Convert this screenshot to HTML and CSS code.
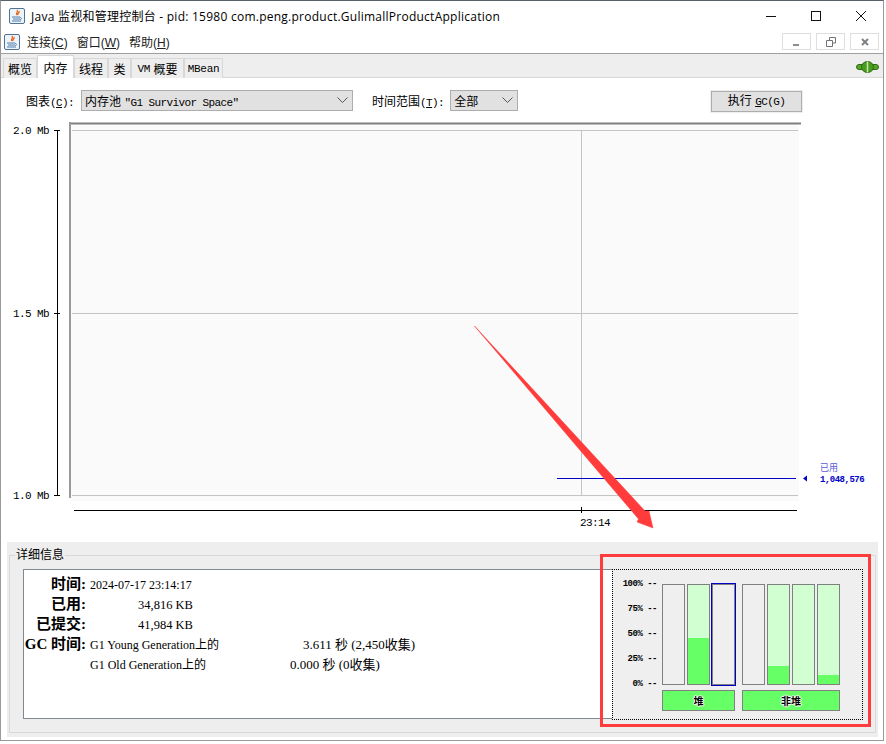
FILE: index.html
```html
<!DOCTYPE html>
<html>
<head>
  <title>Java 监视和管理控制台</title>
  <link rel="stylesheet" href="styles.css">
</head>
<body>
  <div class="window">
    <header class="titlebar">
      <svg class="java-icon" viewBox="0 0 16 16"><rect x="0.5" y="0.5" width="15" height="15" rx="1.5" fill="#eef3f8" stroke="#4f7396"/><path d="M8 2c2 2-2 3 0 5M10 3c1 2-2 2-1 4" fill="none" stroke="#e0641e" stroke-width="1.3"/><path d="M3 9h8M4 11h7M3 13h9" stroke="#4f7fae"/><path d="M11 9.500c2 0 2 2 0 2" fill="none" stroke="#4f7fae"/></svg>
      <span class="title-text">Java 监视和管理控制台 - pid: 15980 com.peng.product.GulimallProductApplication</span>
      <div class="win-controls">
        <svg width="10" height="10" viewBox="0 0 10 10"><path d="M0 5.500h10" stroke="#111"/></svg>
        <svg width="10" height="10" viewBox="0 0 10 10"><rect x="0.500" y="0.500" width="9" height="9" fill="none" stroke="#111"/></svg>
        <svg width="10" height="10" viewBox="0 0 10 10"><path d="M0 0l10 10M10 0L0 10" stroke="#111"/></svg>
      </div>
    </header>

    <nav class="menubar">
      <svg class="java-icon menu-icon" viewBox="0 0 16 16"><rect x="0.5" y="0.5" width="15" height="15" rx="1.5" fill="#eef3f8" stroke="#4f7396"/><path d="M8 2c2 2-2 3 0 5M10 3c1 2-2 2-1 4" fill="none" stroke="#e0641e" stroke-width="1.3"/><path d="M3 9h8M4 11h7M3 13h9" stroke="#4f7fae"/><path d="M11 9.500c2 0 2 2 0 2" fill="none" stroke="#4f7fae"/></svg>
      <span class="menu-item">连接(<u>C</u>)</span>
      <span class="menu-item">窗口(<u>W</u>)</span>
      <span class="menu-item">帮助(<u>H</u>)</span>
      <div class="frame-controls">
        <div class="frame-btn"><svg width="10" height="10" viewBox="0 0 10 10"><rect x="1" y="7" width="6" height="2" fill="#8a8f94"/></svg></div>
        <div class="frame-btn"><svg width="10" height="10" viewBox="0 0 10 10"><path d="M3.500 3V.5h6V6H7M.5 3.500h6v6h-6z" fill="none" stroke="#6f7479"/></svg></div>
        <div class="frame-btn"><svg width="10" height="10" viewBox="0 0 10 10"><path d="M2 2l6 6M8 2L2 8" stroke="#7d8287" stroke-width="2"/></svg></div>
      </div>
    </nav>

    <div class="tabbar">
      <span class="tab tab-1">概览</span>
      <span class="tab tab-active">内存</span>
      <span class="tab tab-3">线程</span>
      <span class="tab tab-4">类</span>
      <span class="tab tab-5"><span class="mono">VM</span> 概要</span>
      <span class="tab tab-6"><span class="mono">MBean</span></span>
      <svg class="plug" width="23" height="12" viewBox="0 0 23 12">
        <rect x="0.500" y="3.500" width="22" height="5" rx="2.500" fill="#58a62a" stroke="#2f6a14"/>
        <ellipse cx="11.500" cy="6" rx="6" ry="5.500" fill="#4a9c20" stroke="#2f6a14"/>
        <path d="M11.500 0.500v11" stroke="#c6e6ac" stroke-width="1.500"/>
      </svg>
    </div>

    <div class="toolbar">
      <span class="field-label">图表<span class="mono">(<u>C</u>):</span></span>
      <div class="combo combo-chart"><span>内存池 <span class="mono">"G1 Survivor Space"</span></span><svg width="11" height="6" viewBox="0 0 11 6"><path d="M.5.500l5 5 5-5" fill="none" stroke="#555"/></svg></div>
      <span class="field-label label-range">时间范围<span class="mono">(<u>T</u>):</span></span>
      <div class="combo combo-range"><span>全部</span><svg width="11" height="6" viewBox="0 0 11 6"><path d="M.5.500l5 5 5-5" fill="none" stroke="#555"/></svg></div>
      <div class="gc-button">执行 <span class="mono"><u>G</u>C(G)</span></div>
    </div>

    <svg class="chart" width="886" height="420" viewBox="0 122 886 420">
      <rect x="71" y="124" width="728" height="377" fill="#fafafa"/>
      <path d="M69 123.500H801" stroke="#7f7f7f" stroke-width="2"/>
      <path d="M70 122V498" stroke="#9a9a9a" stroke-width="2"/>
      <g stroke="#c4c4c4">
        <path d="M72 130.500H798M72 313.500H798M72 495.500H798M581.500 130V495"/>
      </g>
      <g stroke="#000">
        <path d="M57.500 130V496M54 130.500H60M54 313.500H60M54 495.500H60"/>
        <path d="M74 510.500H797M581.500 507V513"/>
      </g>
      <path d="M557 478.500H796" stroke="#0000c8"/>
      <path d="M807 475.500v6l-4-3z" fill="#0000c8"/>
      <g class="axis-text">
        <text x="49" y="134" text-anchor="end">2.0 Mb</text>
        <text x="49" y="317" text-anchor="end">1.5 Mb</text>
        <text x="49" y="499" text-anchor="end">1.0 Mb</text>
        <text x="580" y="526">23:14</text>
      </g>
      <text x="820" y="471" class="used-label">已用</text>
      <text x="820" y="482" class="used-value">1,048,576</text>
    </svg>

    <section class="details">
      <fieldset class="details-group">
        <legend>详细信息</legend>
        <div class="details-body">
          <div class="info-box">
            <div class="info-row"><b>时间:</b><span>2024-07-17 23:14:17</span></div>
            <div class="info-row"><b>已用:</b><span class="kb">34,816 KB</span></div>
            <div class="info-row"><b>已提交:</b><span class="kb">41,984 KB</span></div>
            <div class="info-row"><b>GC 时间:</b><span class="gc-name">G1 Young Generation上的</span><span class="gc-young">3.611 秒 (2,450收集)</span></div>
            <div class="info-row"><b></b><span class="gc-name">G1 Old Generation上的</span><span class="gc-old">0.000 秒 (0收集)</span></div>
          </div>
          <div class="pools">
            <div class="scale">
              <span>100% --</span><span>75% --</span><span>50% --</span><span>25% --</span><span>0% --</span>
            </div>
            <div class="pool-groups">
              <div class="pool-group">
                <div class="bars">
                  <div class="bar"></div>
                  <div class="bar committed"><div class="used" style="height: 46%"></div></div>
                  <div class="bar selected"></div>
                </div>
                <div class="group-label">堆</div>
              </div>
              <div class="pool-group">
                <div class="bars">
                  <div class="bar"></div>
                  <div class="bar committed"><div class="used" style="height: 18%"></div></div>
                  <div class="bar committed"></div>
                  <div class="bar committed"><div class="used" style="height: 9%"></div></div>
                </div>
                <div class="group-label">非堆</div>
              </div>
            </div>
          </div>
        </div>
      </fieldset>
    </section>
  </div>

  <div class="annot-box"></div>
  <svg class="annot-arrow" width="886" height="744" viewBox="0 0 886 744">
    <path d="M474.500 326L645 511 649 511 653 528 637 522 638.500 519z" fill="#ff3b3b" stroke="#ff3b3b" stroke-width="0.5"/>
  </svg>
</body>
</html>
```

FILE: styles.css
```css
* {
  box-sizing: border-box;
}
body {
  margin: 0;
  width: 886px;
  height: 744px;
  overflow: hidden;
  background: #fff;
  font-family: "Liberation Sans", "Noto Sans CJK SC", sans-serif;
  font-size: 12px;
  color: #000;
  position: relative;
}
.window {
  width: 884px;
  height: 741px;
  border-top: 1px solid #5a6068;
  border-left: 1px solid #9a9a9a;
  border-right: 1px solid #9a9a9a;
  border-bottom: 1px solid #9a9a9a;
  display: flex;
  flex-direction: column;
}
.titlebar {
  height: 29px;
  flex: none;
  display: flex;
  align-items: center;
  padding-left: 8px;
}
.java-icon {
  width: 16px;
  height: 16px;
  flex: none;
}
.title-text {
  margin-left: 6px;
  font-family: "Open Sans", "Noto Sans CJK SC", sans-serif;
  font-size: 12px;
  letter-spacing: 0.25px;
  color: #000;
}
.win-controls {
  margin-left: auto;
  display: flex;
  gap: 35px;
  padding-right: 17px;
}
.menubar {
  height: 24px;
  flex: none;
  display: flex;
  align-items: center;
  padding-left: 3px;
  border-bottom: 1px solid #a0a0a0;
}
.menu-icon {
  margin-right: 7px;
}
.menu-item {
  margin-right: 9px;
  color: #222;
}
.frame-controls {
  margin-left: auto;
  display: flex;
  gap: 5px;
  padding-right: 4px;
}
.frame-btn {
  width: 29px;
  height: 17px;
  border: 1px solid #dedede;
  display: flex;
  align-items: center;
  justify-content: center;
}
.tabbar {
  height: 24px;
  flex: none;
  background: #eee;
  border-bottom: 1px solid #d8d8d8;
  display: flex;
  align-items: flex-end;
  padding-left: 2px;
  position: relative;
}
.tab {
  height: 20px;
  margin-bottom: -1px;
  display: flex;
  align-items: center;
  justify-content: center;
  border: 1px solid #d8d8d8;
  border-bottom: none;
  background: #eee;
  font-size: 12px;
  white-space: pre;
}
.tab .mono {
  letter-spacing: -0.3px;
}
.tab-1 { width: 34px; }
.tab-3 { width: 34px; }
.tab-4 { width: 23px; }
.tab-5 { width: 53px; }
.tab-6 { width: 39px; }
.tab-active {
  width: 37px;
  height: 23px;
  background: #fff;
}
.plug {
  position: absolute;
  right: 4px;
  top: 7px;
}
.mono {
  font-family: "Liberation Mono", monospace;
  font-size: 11px;
  letter-spacing: -0.6px;
}
.toolbar {
  height: 44px;
  flex: none;
  display: flex;
  align-items: center;
  padding: 0 81px 0 25px;
}
.field-label {
  margin-right: 7px;
  white-space: nowrap;
}
.label-range {
  margin-left: 19px;
  margin-right: 6px;
}
.combo {
  height: 21px;
  background: #e1e1e1;
  border: 1px solid #adadad;
  display: flex;
  align-items: center;
  justify-content: space-between;
  padding: 0 4px 0 3px;
}
.combo-chart {
  width: 272px;
}
.combo-range {
  width: 68px;
}
.gc-button {
  margin-left: auto;
  width: 91px;
  height: 21px;
  margin-top: 2px;
  background: #e1e1e1;
  border: 1px solid #adadad;
  outline: 1px solid #eee;
  text-align: center;
  line-height: 19px;
}
.chart {
  display: block;
  flex: none;
  height: 420px;
  margin-left: -1px;
}
.axis-text text {
  font-family: "Liberation Mono", monospace;
  font-size: 11px;
  letter-spacing: -0.6px;
}
.used-label {
  font-size: 9px;
  fill: #5a5ad8;
}
.used-value {
  font-family: "Liberation Mono", monospace;
  font-size: 9px;
  font-weight: bold;
  letter-spacing: -0.5px;
  fill: #0000c8;
}
.details {
  flex: 1;
  min-height: 0;
  margin: 0 5px 3px 6px;
  background: #eee;
  padding: 6px 2px 4px 2px;
}
.details-group {
  margin: 0;
  padding: 0 9px 0 13px;
  height: 100%;
  border: 1px solid #d8d8d8;
  min-width: 0;
}
.details-group legend {
  padding: 0 1px;
  margin-left: -8px;
  font-size: 12px;
  line-height: 14px;
  margin-bottom: -1px;
}
.details-body {
  display: flex;
  height: 150px;
  margin-top: 8px;
}
.info-box {
  width: 589px;
  height: 150px;
  flex: none;
  background: #fff;
  border: 1px solid #808890;
  border-right: none;
  padding-top: 5px;
  font-family: "Liberation Serif", "Noto Sans CJK SC", serif;
  font-size: 12px;
}
.info-row {
  height: 20px;
  line-height: 20px;
  display: flex;
  align-items: center;
}
.info-row b {
  width: 62px;
  margin: 0 4px 3px 0;
  flex: none;
  text-align: right;
  font-size: 15px;
  white-space: nowrap;
}
.kb {
  margin-left: 48px;
  font-size: 12.500px;
}
.gc-name {
  width: 200px;
  flex: none;
}
.gc-young {
  margin-left: 13px;
  font-size: 13px;
}
.gc-old {
  font-size: 13px;
}
.pools {
  width: 251px;
  height: 151px;
  flex: none;
  border: 1px dotted #000;
  background: #efefef;
  display: flex;
  padding: 14px 0 0 0;
  font-family: "Liberation Mono", monospace;
}
.scale {
  width: 44px;
  height: 108px;
  margin: -4px 5px 0 0;
  flex: none;
  display: flex;
  flex-direction: column;
  justify-content: space-between;
  align-items: flex-end;
  font-size: 9px;
  font-weight: bold;
  letter-spacing: -0.5px;
  line-height: 8px;
  white-space: nowrap;
}
.pool-groups {
  display: flex;
  gap: 7px;
}
.pool-group {
  display: flex;
  flex-direction: column;
  gap: 5px;
}
.bars {
  display: flex;
  gap: 2px;
  height: 101px;
}
.bar {
  width: 23px;
  height: 101px;
  border: 1px solid #808080;
  display: flex;
  align-items: flex-end;
}
.committed {
  background: #d2ffd2;
}
.used {
  width: 100%;
  background: #66ff66;
}
.selected {
  outline: 1px solid #0000c8;
}
.group-label {
  height: 21px;
  background: #66ff66;
  border: 1px solid #808080;
  text-align: center;
  font-size: 10px;
  font-weight: bold;
  line-height: 19px;
  font-family: "Noto Sans CJK SC", sans-serif;
  text-shadow: 1px 0 #fff, -1px 0 #fff, 0 1px #fff, 0 -1px #fff;
}
.annot-box {
  position: absolute;
  left: 600px;
  top: 554px;
  width: 271px;
  height: 173px;
  border: 3px solid #ff3b3b;
}
.annot-arrow {
  position: absolute;
  left: 0;
  top: 0;
}
```
